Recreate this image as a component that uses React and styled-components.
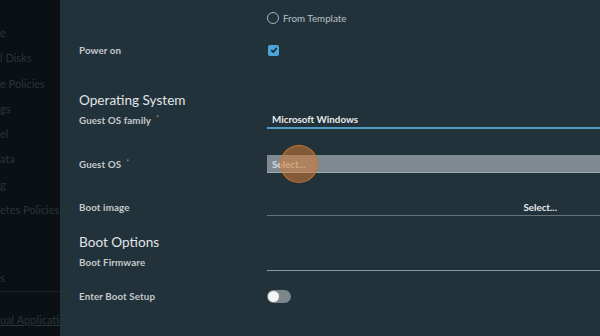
import React from "react";
import styled, { createGlobalStyle } from "styled-components";

const Global = createGlobalStyle`
    html, body { margin: 0; padding: 0; }
    body {
        width: 600px;
        height: 336px;
        overflow: hidden;
        background: #22323b;
        font-family: "Lato", "Open Sans", sans-serif;
    }
`;

const Page = styled.div`
    display: flex;
    width: 600px;
    height: 336px;
    overflow: hidden;
`;

const Sidebar = styled.nav`
    width: 60px;
    flex-shrink: 0;
    background: #0a1014;
    overflow: hidden;
    display: flex;
    flex-direction: column;
    padding-top: 26px;
    box-sizing: border-box;
    white-space: nowrap;
`;

const NavItem = styled.div`
    flex-shrink: 0;
    height: 25.3px;
    line-height: 14px;
    font-size: 11px;
    color: #2a3439;
    margin-top: ${(p) => p.$mt || 0}px;
    text-decoration: ${(p) => (p.$link ? "underline" : "none")};
`;

const NavDivider = styled.div`
    flex-shrink: 0;
    height: 1px;
    background: #1a2226;
    margin: -6px 0 21px;
`;

const Main = styled.main`
    flex: 1;
    background: #22323b;
    padding-left: 19px;
    padding-top: 10px;
    box-sizing: border-box;
`;

const Row = styled.div`
    display: grid;
    grid-template-columns: 188px 1fr;
    align-items: center;
    height: ${(p) => p.$h || 18}px;
    margin-top: ${(p) => p.$mt || 0}px;
`;

const Label = styled.div`
    font-size: 9.8px;
    font-weight: 700;
    color: #c3c9cc;
    letter-spacing: 0.1px;
    display: flex;
    align-items: center;
    gap: 5px;
`;

const Req = styled.span`
    font-size: 7px;
    color: #7f8a8f;
    margin-top: -4px;
`;

const Heading = styled.h2`
    margin: 0;
    margin-top: ${(p) => p.$mt}px;
    height: 16px;
    line-height: 16px;
    font-size: 13.6px;
    font-weight: 400;
    color: #e0e4e6;
`;

const RadioLine = styled.label`
    display: flex;
    align-items: center;
    gap: 4px;
    font-size: 9.8px;
    color: #b9c0c3;
`;

const RadioCircle = styled.span`
    width: 10px;
    height: 10px;
    border: 1.5px solid #a9b2b6;
    border-radius: 50%;
`;

const Checkbox = styled.span`
    width: 11px;
    height: 11px;
    border-radius: 2px;
    background: #4aa6d6;
    display: flex;
    align-items: center;
    justify-content: center;
    margin-left: 1px;
`;

const Field = styled.div`
    height: 18px;
    box-sizing: border-box;
    display: flex;
    align-items: center;
    justify-content: ${(p) => (p.$end ? "flex-end" : "flex-start")};
    padding: 0 ${(p) => (p.$end ? "43px" : "5px")} 0 5px;
    font-size: 9.8px;
    font-weight: 700;
    color: ${(p) => p.$color || "#e6eaec"};
    border-bottom: ${(p) => p.$lineW || 1}px solid ${(p) => p.$line};
    background: ${(p) => p.$bg || "transparent"};
    position: relative;
`;

const Touch = styled.span`
    position: absolute;
    left: 13px;
    top: -10px;
    width: 38px;
    height: 38px;
    border-radius: 50%;
    background: rgba(214, 124, 52, 0.54);
    border: 1.5px solid rgba(200, 118, 50, 0.95);
    box-sizing: border-box;
`;

const Toggle = styled.span`
    width: 24px;
    height: 13px;
    border-radius: 7px;
    background: #7c868b;
    display: flex;
    align-items: center;
    padding-left: 1px;
    box-sizing: border-box;
`;

const Knob = styled.span`
    width: 11px;
    height: 11px;
    border-radius: 50%;
    background: #f4f6f7;
`;

const Check = () => (
    <svg width="8" height="8" viewBox="0 0 8 8">
        <path d="M1.3 4.2 L3.2 6 L6.8 2" fill="none" stroke="#16222a" strokeWidth="1.6" />
    </svg>
);

export default function App() {
    return (
        <Page>
            <Global />
            <Sidebar>
                <NavItem>e</NavItem>
                <NavItem>l Disks</NavItem>
                <NavItem>e Policies</NavItem>
                <NavItem>gs</NavItem>
                <NavItem>el</NavItem>
                <NavItem>ata</NavItem>
                <NavItem>g</NavItem>
                <NavItem>etes Policies</NavItem>
                <NavItem $mt={43}>s</NavItem>
                <NavDivider />
                <NavItem $link>ual Applicatio</NavItem>
            </Sidebar>
            <Main>
                <Row $h={16}>
                    <span />
                    <RadioLine>
                        <RadioCircle />
                        From Template
                    </RadioLine>
                </Row>
                <Row $h={16} $mt={16}>
                    <Label>Power on</Label>
                    <Checkbox>
                        <Check />
                    </Checkbox>
                </Row>
                <Heading $mt={34}>Operating System</Heading>
                <Row $mt={3}>
                    <Label>
                        Guest OS family <Req>*</Req>
                    </Label>
                    <Field $line="#4f9cc4" $lineW={2}>Microsoft Windows</Field>
                </Row>
                <Row $mt={26}>
                    <Label>
                        Guest OS <Req>*</Req>
                    </Label>
                    <Field $bg="#7e8a90" $line="#a3adb1" $color="#d7dde0">
                        Select...
                        <Touch />
                    </Field>
                </Row>
                <Row $mt={25}>
                    <Label>Boot image</Label>
                    <Field $end $line="#66747a">Select...</Field>
                </Row>
                <Heading $mt={18}>Boot Options</Heading>
                <Row $mt={3}>
                    <Label>Boot Firmware</Label>
                    <Field $line="#8b979c" />
                </Row>
                <Row $h={16} $mt={17}>
                    <Label>Enter Boot Setup</Label>
                    <Toggle>
                        <Knob />
                    </Toggle>
                </Row>
            </Main>
        </Page>
    );
}
